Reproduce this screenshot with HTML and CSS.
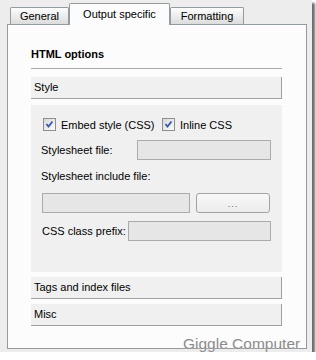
FILE: index.html
```html
<!DOCTYPE html>
<html lang="en">
<head>
  <meta charset="UTF-8">
  <title>Output specific</title>
  <link rel="stylesheet" href="styles.css">
</head>
<body>
  <div class="frame">

    <!-- Tabs -->
    <div class="tabs">
      <div class="tab tab-general">General</div>
      <div class="tab tab-active tab-output">Output specific</div>
      <div class="tab tab-format">Formatting</div>
    </div>

    <div class="panel">
      <div class="group-title">HTML options</div>

      <div class="section-head">Style</div>
      <div class="section-body">
        <div class="check-row">
          <label class="check check-embed">
            <svg class="box" width="13" height="13" viewBox="0 0 13 13">
              <defs>
                <linearGradient id="cbg" x1="0" y1="0" x2="1" y2="1">
                  <stop offset="0" stop-color="#d6d6d6"/>
                  <stop offset="1" stop-color="#fdfdfd"/>
                </linearGradient>
              </defs>
              <rect x="0.5" y="0.5" width="12" height="12" fill="url(#cbg)" stroke="#8e8e8e"/>
              <path d="M3.5 6 L5.5 8.5 L9.5 3.5" fill="none" stroke="#3a57a8" stroke-width="1.8"/>
            </svg>
            <span>Embed style (CSS)</span>
          </label>
          <label class="check">
            <svg class="box" width="13" height="13" viewBox="0 0 13 13">
              <rect x="0.5" y="0.5" width="12" height="12" fill="url(#cbg)" stroke="#8e8e8e"/>
              <path d="M3.5 6 L5.5 8.5 L9.5 3.5" fill="none" stroke="#3a57a8" stroke-width="1.8"/>
            </svg>
            <span>Inline CSS</span>
          </label>
        </div>

        <div class="field-row">
          <span class="label">Stylesheet file:</span>
          <div class="input input-sheet"></div>
        </div>

        <div class="label label-block">Stylesheet include file:</div>
        <div class="field-row row-include">
          <div class="input input-include"></div>
          <div class="btn">...</div>
        </div>

        <div class="field-row row-prefix">
          <span class="label">CSS class prefix:</span>
          <div class="input input-prefix"></div>
        </div>
      </div>

      <div class="section-head head-gap">Tags and index files</div>
      <div class="section-head head-gap">Misc</div>
    </div>

    <div class="watermark">Giggle Computer</div>
  </div>
</body>
</html>
```

FILE: styles.css
```css
body {
  margin: 0;
  padding: 0;
  background: #fff;
  font-family: "Liberation Sans", Arial, sans-serif;
  font-size: 11px;
  color: #000;
}

.frame {
  position: relative;
  width: 312px;
  height: 352px;
  background: #ededed;
  box-shadow: 3px 3px 2px #6e6e6e;
}

/* Tabs */
.tabs {
  display: flex;
  align-items: flex-end;
  height: 21px;
  padding: 3px 0 0 10px;
}

.tab {
  box-sizing: border-box;
  height: 17px;
  border: 1px solid #939b9e;
  border-bottom: none;
  border-radius: 2px 2px 0 0;
  background: linear-gradient(#fdfdfd, #dcdcdc);
  text-align: center;
  line-height: 16px;
}

.tab-general { width: 59px; }
.tab-format { width: 74px; }

.tab-active {
  position: relative;
  z-index: 1;
  width: 101px;
  height: 22px;
  margin-bottom: -1px;
  background: #fcfcfc;
  line-height: 20px;
}

/* Panel */
.panel {
  box-sizing: border-box;
  width: 300px;
  height: 325px;
  margin-left: 7px;
  border: 1px solid #939b9e;
  background: #fcfcfc;
  padding: 23px 24px 0 23px;
}

.group-title {
  font-weight: bold;
  line-height: 13px;
  padding-bottom: 7px;
  border-bottom: 1px solid #a8a8a8;
}

.section-head {
  height: 21px;
  margin-top: 8px;
  padding-left: 3px;
  background: #f0f0f0;
  border-right: 1px solid #a0a0a0;
  border-bottom: 1px solid #a0a0a0;
  line-height: 21px;
}

.head-gap {
  margin-top: 5px;
}

.section-body {
  height: 167px;
  margin-top: 6px;
  padding: 13px 11px 0 10px;
  box-sizing: border-box;
  background: #f0f0f0;
}

.check-row {
  display: flex;
  align-items: center;
  height: 13px;
  padding-left: 2px;
}

.check {
  display: flex;
  align-items: center;
  gap: 5px;
}

.check-embed {
  width: 119px;
}

.box {
  display: block;
}

.field-row {
  display: flex;
  align-items: center;
  justify-content: space-between;
  margin-top: 9px;
}

.label {
  line-height: 13px;
}

.label-block {
  margin-top: 10px;
}

.row-include {
  margin-top: 10px;
  padding-left: 1px;
}

.row-prefix {
  margin-top: 8px;
  padding-left: 1px;
}

.input {
  box-sizing: border-box;
  height: 20px;
  border: 1px solid #ababab;
  background: #e6e6e6;
}

.input-sheet { width: 134px; }
.input-include { width: 148px; }
.input-prefix { width: 143px; }

.btn {
  box-sizing: border-box;
  width: 74px;
  height: 20px;
  margin-right: 1px;
  border: 1px solid #a3a3a3;
  border-radius: 3px;
  background: linear-gradient(#f8f8f8, #ececec);
  color: #666;
  font-size: 9px;
  text-align: center;
  line-height: 20px;
  letter-spacing: 1px;
}

.watermark {
  position: absolute;
  left: 183px;
  top: 335px;
  font-size: 15.5px;
  line-height: 18px;
  color: #8c8c8c;
  text-shadow: 0 0 1px #fff;
  white-space: nowrap;
}
```
